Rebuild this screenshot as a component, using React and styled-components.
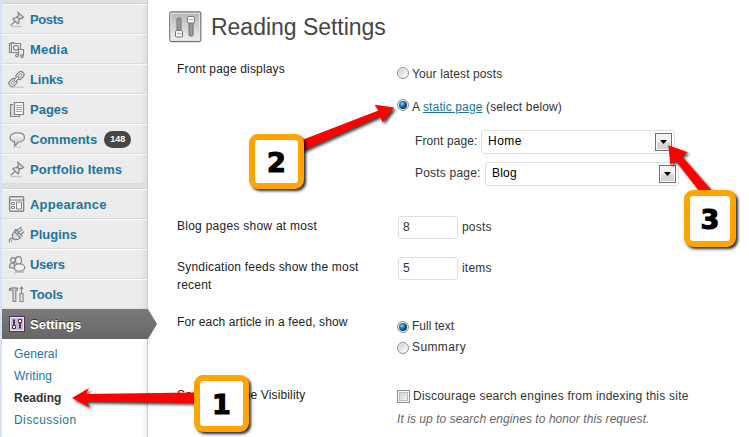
import React from "react";
import styled, { createGlobalStyle, css } from "styled-components";

const Global = createGlobalStyle`
  * { box-sizing: border-box; }
  body { margin: 0; background: #fff; }
`;

const Page = styled.div`
  position: relative;
  display: flex;
  width: 749px;
  height: 437px;
  overflow: hidden;
  background: #fff;
  color: #333;
  font: 12px/18px "Liberation Sans", Arial, sans-serif;
`;

const Sidebar = styled.nav`
  flex: none;
  width: 148px;
  height: 437px;
  border-left: 2px solid #d5e4f2;
  border-right: 1px solid #ccc;
  background: linear-gradient(90deg, #ececec 0 139px, #dedede 145px);
`;

const MenuDivider = styled.div`
  height: ${(p) => p.$h}px;
  background: #dfdfdf;
  border-bottom: 1px solid #d2d2d2;
`;

const Label = styled.span`
  letter-spacing: ${(p) => p.$ls || 0}px;
  white-space: nowrap;
`;

const MenuItem = styled.a`
  position: relative;
  display: flex;
  align-items: center;
  height: 30px;
  padding-left: 6px;
  border-top: 1px solid #fafafa;
  border-bottom: 1px solid #dcdcdc;
  color: #21759b;
  font-size: 13px;
  font-weight: bold;
  white-space: nowrap;
  ${Label} {
    padding-top: 2px;
  }
  ${(p) =>
    p.$active &&
    css`
      width: 156px;
      color: #fff;
      border: 0;
      background: linear-gradient(#7b7b7b, #666);
      clip-path: polygon(0 0, 146px 0, 155px 50%, 146px 100%, 0 100%);
      text-shadow: 0 -1px 0 #333;
    `}
`;

const MenuIcon = styled.svg`
  flex: none;
  width: 18px;
  height: 18px;
  margin-right: 4px;
  fill: none;
  stroke: #858585;
  stroke-width: 1.2;
`;

const Count = styled.span`
  width: 27px;
  height: 17px;
  margin-left: 7px;
  border-radius: 9px;
  background: #464646;
  color: #fff;
  font-size: 9px;
  line-height: 17px;
  text-align: center;
`;

const Submenu = styled.div`
  display: flex;
  flex-direction: column;
  height: 98px;
  padding: 4px 0 0 12px;
  background: linear-gradient(90deg, #fff 0 140px, #f0f0f0 145px);
`;

const SubItem = styled.a`
  height: 22px;
  line-height: 22px;
  color: ${(p) => (p.$current ? "#333" : "#21759b")};
  font-weight: ${(p) => (p.$current ? "bold" : "normal")};
`;

const Main = styled.main`
  flex: 1;
  padding-left: 21px;
`;

const Header = styled.header`
  display: flex;
  align-items: center;
  height: 50px;
  padding-top: 4px;
`;

const HeaderIcon = styled.svg`
  width: 33px;
  height: 32px;
  margin-right: 9px;
`;

const Title = styled.h1`
  margin: 0;
  color: #464646;
  font-size: 23px;
  font-weight: normal;
  line-height: 30px;
  letter-spacing: ${(p) => p.$ls}px;
  white-space: nowrap;
`;

const FormRow = styled.div`
  display: grid;
  grid-template-columns: 220px 1fr;
  height: ${(p) => p.$h}px;
  padding: 10px 0 0 8px;
`;

const FieldName = styled.div`
  padding-top: ${(p) => p.$top || 0}px;
  color: #222;
`;

const Fields = styled.div`
  padding-top: ${(p) => p.$top || 0}px;
`;

const Option = styled.label`
  display: flex;
  align-items: center;
  height: ${(p) => p.$h}px;
`;

const Radio = styled.span`
  flex: none;
  display: grid;
  place-items: center;
  width: 12px;
  height: 12px;
  margin: ${(p) => p.$shift || "0"} 3px 0 0;
  border: 1px solid #8e8f8f;
  border-radius: 50%;
  background: linear-gradient(135deg, #c6c9cd, #f6f6f6 75%);
  box-shadow: inset 0 0 0 1px #f4f4f4;
  &::after {
    content: "";
    width: 8px;
    height: 8px;
    border-radius: 50%;
    background: ${(p) =>
      p.$on
        ? "radial-gradient(circle at 38% 35%, #9be0fa 0, #2c8fbd 25%, #0c3c5c 65%, #12324a 100%)"
        : "transparent"};
  }
`;

const Checkbox = styled.span`
  flex: none;
  width: 13px;
  height: 13px;
  margin: 1px 3px 0 0;
  border: 1px solid #8e8f8f;
  background: linear-gradient(135deg, #cbcfd5, #f6f6f6);
  box-shadow: inset 0 0 0 1px #f4f4f4, inset 0 0 0 2px #b8bcc2;
`;

const Link = styled.a`
  color: #21759b;
  text-decoration: underline;
`;

const SelectRow = styled.div`
  display: flex;
  align-items: center;
  height: 24px;
  margin: ${(p) => p.$mt}px 0 0 18px;
`;

const SelectName = styled.div`
  width: ${(p) => p.$w}px;
  margin-top: -2px;
  white-space: nowrap;
`;

const Select = styled.div`
  display: flex;
  align-items: center;
  justify-content: space-between;
  width: 194px;
  height: 24px;
  padding: 0 2px 1px 6px;
  border: 1px solid #dfdfdf;
  border-radius: 3px;
  color: #000;
  line-height: 18px;
  ${Label} {
    padding-bottom: 1px;
  }
`;

const DropButton = styled.span`
  display: grid;
  place-items: center;
  width: 17px;
  height: 18px;
  margin-top: 1px;
  border: 1px solid #707070;
  background: linear-gradient(#f2f2f2 0 48%, #dadada 52%, #cfcfcf);
  box-shadow: inset 0 0 0 1px #fafafa;
`;

const NumberRow = styled.div`
  display: flex;
  align-items: center;
  height: 23px;
  ${Label} {
    margin-top: -1px;
  }
`;

const NumberBox = styled.div`
  width: 60px;
  height: 23px;
  margin: 0 4px 0 1px;
  padding-left: 4px;
  border: 1px solid #dfdfdf;
  border-radius: 3px;
  line-height: 20px;
`;

const Hint = styled.p`
  margin: 4px 0 0;
  color: #666;
  font-style: italic;
`;

const Arrows = styled.svg`
  position: absolute;
  inset: 0;
  filter: drop-shadow(2px 2px 1.5px rgba(0, 0, 0, 0.75));
`;

const Callout = styled.div`
  position: absolute;
  left: ${(p) => p.$x}px;
  top: ${(p) => p.$y}px;
  width: ${(p) => p.$w}px;
  height: ${(p) => p.$h}px;
  display: grid;
  place-items: center;
  padding-top: 3px;
  border-radius: 9px;
  border: 6px solid #ffa500;
  background: #fff;
  box-shadow: 2px 2px 3px rgba(0, 0, 0, 0.85);
  color: #000;
  font: bold 27px/30px "DejaVu Sans", sans-serif;
  -webkit-text-stroke: 1.2px #000;
`;

const ICONS = {
  pin: (
    <>
      <path d="M10 2.500l5.500 4.700-1.500 1.300-1.300-.3-2 2.300.3 2.200-1.200 1-5-4.700 1.200-1.200 2.200.2 2.300-2.200-.2-1.300z" fill="#e6e6e6" />
      <path d="M8.500 6.500l3.500 3M6.800 11.500L2.500 15.500" />
      <path d="M3 16.500h11" stroke="#c4c4c4" />
    </>
  ),
  media: (
    <>
      <path d="M1.500 3.500h2v-1h2v1h7v9h-11z" fill="#f1f1f1" />
      <path d="M3.500 4v8" />
      <circle cx="8" cy="7.800" r="2.400" fill="#fff" />
      <path d="M10.500 15.500V9.500h5v6.500" fill="#ececec" />
      <circle cx="9" cy="15.500" r="1.400" />
      <circle cx="14" cy="16" r="1.400" />
    </>
  ),
  link: (
    <>
      <path d="M2 17.300h14" stroke="#ccc" />
      <g transform="rotate(-45 8.500 9)">
        <rect x="-.8" y="5.900" width="8.600" height="6.200" rx="3.100" fill="#e2e2e2" />
        <rect x="9.200" y="5.900" width="8.600" height="6.200" rx="3.100" fill="#e2e2e2" />
        <rect x="1.500" y="8" width="4" height="2" rx="1" fill="#fff" strokeWidth=".9" />
        <rect x="11.500" y="8" width="4" height="2" rx="1" fill="#fff" strokeWidth=".9" />
        <path d="M6 7.900h5v2.200H6z" fill="#eee" strokeWidth=".9" />
      </g>
    </>
  ),
  pages: (
    <>
      <path d="M5.500 4.500h-3v12h9v-2" fill="#ddd" />
      <path d="M6.500 2.500h9v12h-9z" fill="#fafafa" />
      <path d="M8 5.500h2.500M11.500 5.500H14M8 7.500h6M8 9.500h6M8 11.500h6" stroke="#aaa" strokeWidth="1" />
    </>
  ),
  comment: (
    <>
      <path d="M9.500 2.800c4.200 0 7 1.800 7 4.600s-2.800 4.600-6 4.600L6.500 16.400v-4.500C3.500 11.200 2 9.800 2 7.600 2 4.800 5 2.800 9.500 2.800z" fill="url(#bubble)" />
      <path d="M6 17h8" stroke="#ccc" />
      <defs>
        <linearGradient id="bubble" x2="0" y2="1">
          <stop stopColor="#fff" />
          <stop offset="1" stopColor="#bbb" />
        </linearGradient>
      </defs>
    </>
  ),
  appearance: (
    <>
      <rect x="1.600" y="1.700" width="14" height="14.500" rx="1" fill="#f7f7f7" strokeWidth="1.400" />
      <path d="M2 5h13" />
      <path d="M3.500 7.500h3v2h-3zM3.500 11.500h3v2h-3zM8.500 7h5v7h-5z" strokeWidth="1" />
    </>
  ),
  plug: (
    <>
      <path d="M6.500 6.500l6 6.300-3 1.700-3 .2-2-2L4.500 9.500z" fill="#dedede" />
      <path d="M7.500 4.500l7 7M6.500 6.500l1-2 2.500.5M9.500 5l4-3M12.500 10l3.500-3.500M9.500 8.500L14.500 4M5 12.800c-3 0-4 2-3.500 4.500" />
      <path d="M5 14c-1.500.5-1.500 2-1.500 3" stroke="#aaa" />
    </>
  ),
  users: (
    <>
      <circle cx="5" cy="5" r="2.300" fill="#eee" />
      <path d="M1.500 12.500c0-3 .8-4.500 3-4.700l2 .4v5z" fill="#e2e2e2" />
      <ellipse cx="10.500" cy="5.500" rx="3" ry="3.800" fill="#eee" />
      <ellipse cx="11.500" cy="12.500" rx="5.200" ry="3.700" fill="#f2f2f2" />
      <path d="M7 17h9" stroke="#aaa" />
    </>
  ),
  tools: (
    <>
      <path d="M1.500 5.500V3.800c2-1.300 4.500-1 8-.7v2H7.800v11.400H5V5L3 4.800z" fill="#ddd" />
      <path d="M13.500 2v6M12 8.500h3v8h-3zM12 4l1.500-2L15 4" fill="#eee" />
    </>
  ),
  settings: (
    <>
      <rect x="1.500" y="1.500" width="15" height="15" fill="#c9b6d1" stroke="#4f3557" strokeWidth="1" />
      <rect x="2.500" y="2.500" width="13" height="13" stroke="#efe6f2" strokeWidth="1" />
      <path d="M6 4.500v6M12 8v5.500" stroke="#4f3557" strokeWidth="2" />
      <path d="M4.500 10.500h3v3h-3zM10.500 4.500h3v3h-3z" fill="#fff" stroke="#4f3557" strokeWidth="1" />
    </>
  ),
};

const Item = ({ icon, text, ls, active, count }) => (
  <MenuItem $active={active}>
    <MenuIcon viewBox="0 0 18 18">{ICONS[icon]}</MenuIcon>
    <Label $ls={ls}>{text}</Label>
    {count && <Count>{count}</Count>}
  </MenuItem>
);

const Drop = () => (
  <DropButton>
    <svg width="7" height="4" viewBox="0 0 7 4">
      <path d="M0 0h7L3.500 4z" fill="#000" />
    </svg>
  </DropButton>
);

export default function App() {
  return (
    <Page>
      <Global />
      <Sidebar>
        <MenuDivider $h={4} />
        <Item icon="pin" text="Posts" ls={-0.4} />
        <Item icon="media" text="Media" ls={0.2} />
        <Item icon="link" text="Links" ls={-0.15} />
        <Item icon="pages" text="Pages" />
        <Item icon="comment" text="Comments" count="148" />
        <Item icon="pin" text="Portfolio Items" ls={0.07} />
        <MenuDivider $h={5} />
        <Item icon="appearance" text="Appearance" ls={0.22} />
        <Item icon="plug" text="Plugins" />
        <Item icon="users" text="Users" ls={-0.3} />
        <Item icon="tools" text="Tools" ls={-0.15} />
        <Item icon="settings" text="Settings" active />
        <Submenu>
          <SubItem><Label $ls={0.1}>General</Label></SubItem>
          <SubItem><Label $ls={0.15}>Writing</Label></SubItem>
          <SubItem $current><Label>Reading</Label></SubItem>
          <SubItem><Label $ls={0.45}>Discussion</Label></SubItem>
        </Submenu>
      </Sidebar>

      <Main>
        <Header>
          <HeaderIcon viewBox="0 0 33 32">
            <defs>
              <linearGradient id="plate" x2="0" y2="1">
                <stop stopColor="#b5b5b5" />
                <stop offset="1" stopColor="#f0f0f0" />
              </linearGradient>
            </defs>
            <rect x=".8" y="1" width="31" height="29.500" rx="1.500" fill="url(#plate)" stroke="#777" strokeWidth="1.300" />
            <rect x="2" y="2.200" width="28.600" height="27" fill="none" stroke="#e8e8e8" />
            <rect x="8" y="7" width="4" height="14" rx="1" fill="#999" stroke="#707070" />
            <rect x="20" y="10" width="4" height="15" rx="1" fill="#999" stroke="#707070" />
            <rect x="6.500" y="19.500" width="7" height="6.500" rx="1" fill="#f4f4f4" stroke="#777" />
            <rect x="18.500" y="5.500" width="7" height="6.500" rx="1" fill="#f4f4f4" stroke="#777" />
            <path d="M8 22.500h4M20 8.500h4" stroke="#aaa" />
          </HeaderIcon>
          <Title $ls={-0.02}>Reading Settings</Title>
        </Header>

        <FormRow $h={156}>
          <FieldName><Label $ls={0.17}>Front page displays</Label></FieldName>
          <Fields $top={4}>
            <Option $h={20}>
              <Radio $shift="-3px" />
              <Label $ls={0.12}>Your latest posts</Label>
            </Option>
            <Option $h={46}>
              <Radio $on $shift="-4px" />
              <Label $ls={0.14}>A <Link>static page</Link> (select below)</Label>
            </Option>
            <SelectRow $mt={0}>
              <SelectName $w={66}><Label $ls={0.1}>Front page:</Label></SelectName>
              <Select><Label $ls={0.5}>Home</Label><Drop /></Select>
            </SelectRow>
            <SelectRow $mt={8}>
              <SelectName $w={70}><Label $ls={0.2}>Posts page:</Label></SelectName>
              <Select><Label $ls={0.2}>Blog</Label><Drop /></Select>
            </SelectRow>
          </Fields>
        </FormRow>

        <FormRow $h={41}>
          <FieldName $top={1}><Label $ls={0.26}>Blog pages show at most</Label></FieldName>
          <Fields>
            <NumberRow><NumberBox>8</NumberBox><Label $ls={0.2}>posts</Label></NumberRow>
          </Fields>
        </FormRow>

        <FormRow $h={55}>
          <FieldName $top={1}>
            <Label $ls={0.2}>Syndication feeds show the most<br />recent</Label>
          </FieldName>
          <Fields>
            <NumberRow><NumberBox>5</NumberBox><Label $ls={0.2}>items</Label></NumberRow>
          </Fields>
        </FormRow>

        <FormRow $h={73}>
          <FieldName $top={1}><Label $ls={0.12}>For each article in a feed, show</Label></FieldName>
          <Fields $top={3}>
            <Option $h={21}><Radio $on $shift="2px" /><Label>Full text</Label></Option>
            <Option $h={21}><Radio $shift="2px" /><Label $ls={0.4}>Summary</Label></Option>
          </Fields>
        </FormRow>

        <FormRow $h={62}>
          <FieldName $top={1}><Label $ls={0.13}>Search Engine Visibility</Label></FieldName>
          <Fields $top={1}>
            <Option $h={20}>
              <Checkbox />
              <Label $ls={0.22}>Discourage search engines from indexing this site</Label>
            </Option>
            <Hint><Label $ls={0.06}>It is up to search engines to honor this request.</Label></Hint>
          </Fields>
        </FormRow>
      </Main>

      <Arrows width="749" height="437" viewBox="0 0 749 437" fill="#f00">
        <path d="M72 398L89 388 86 394 196 392.500V403L86 401.500 90 407.500z" />
        <path d="M394 107.500L374.500 104.700 378.500 110.500 302 140V151L380 116 382.500 122.500z" />
        <path d="M668.300 145.300L687.700 152.300 681.500 156 713 192H700L675.500 160.500 670.500 165z" />
      </Arrows>
      <Callout $x={194} $y={375} $w={55} $h={57}>1</Callout>
      <Callout $x={249} $y={134} $w={55} $h={55}>2</Callout>
      <Callout $x={684} $y={190} $w={52} $h={57}>3</Callout>
    </Page>
  );
}
